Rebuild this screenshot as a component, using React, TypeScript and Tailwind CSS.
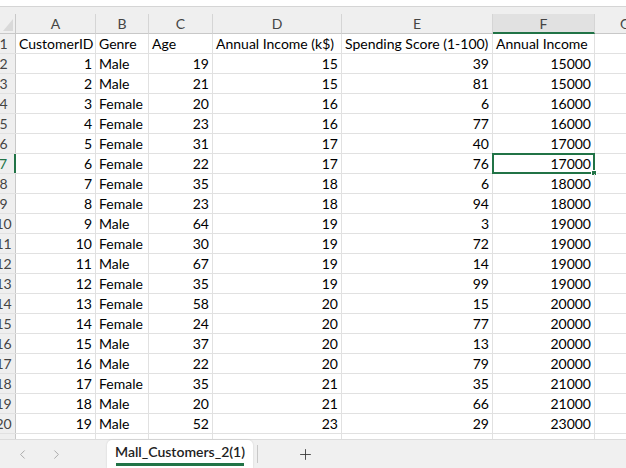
import React from 'react';
import { ChevronLeft, ChevronRight, Plus } from 'lucide-react';

const rows: [number, string, number, number, number, number][] = [
  [1, 'Male', 19, 15, 39, 15000],
  [2, 'Male', 21, 15, 81, 15000],
  [3, 'Female', 20, 16, 6, 16000],
  [4, 'Female', 23, 16, 77, 16000],
  [5, 'Female', 31, 17, 40, 17000],
  [6, 'Female', 22, 17, 76, 17000],
  [7, 'Female', 35, 18, 6, 18000],
  [8, 'Female', 23, 18, 94, 18000],
  [9, 'Male', 64, 19, 3, 19000],
  [10, 'Female', 30, 19, 72, 19000],
  [11, 'Male', 67, 19, 14, 19000],
  [12, 'Female', 35, 19, 99, 19000],
  [13, 'Female', 58, 20, 15, 20000],
  [14, 'Female', 24, 20, 77, 20000],
  [15, 'Male', 37, 20, 13, 20000],
  [16, 'Male', 22, 20, 79, 20000],
  [17, 'Female', 35, 21, 35, 21000],
  [18, 'Male', 20, 21, 66, 21000],
  [19, 'Male', 52, 23, 29, 23000],
];

const cell = 'h-full shrink-0 border-r border-[#e1e1e1] px-[3px] flex items-center whitespace-nowrap overflow-hidden';

function ColHead({ w, label, active }: { w: string; label: string; active?: boolean }) {
  return (
    <div
      className={`${w} h-full shrink-0 flex items-center justify-center border-r border-[#d5d5d5] text-[#444] ${
        active ? 'bg-[#e1e1e1] border-b-2 border-b-[#217346]' : 'border-b border-b-[#c8c8c8]'
      }`}
    >
      {label}
    </div>
  );
}

export default function App() {
  return (
    <div
      className="w-[626px] h-[468px] overflow-hidden bg-white flex flex-col text-[14px] text-black"
      style={{ fontFamily: 'Lato, "Liberation Sans", sans-serif' }}
    >
      <div className="h-[6px] shrink-0 bg-white" />
      <div className="h-[8px] shrink-0 bg-[#efefef] border-t border-[#d5d5d5]" />

      {/* column header */}
      <div className="h-[20px] shrink-0 flex bg-[#efefef]">
        <div className="w-[24px] -ml-[8px] h-full shrink-0 border-r border-b border-[#c8c8c8] flex items-end justify-end pr-[2px] pb-[2px]">
          <svg width="10" height="12" viewBox="0 0 10 12">
            <polygon points="10,0 10,12 0,12" fill="#d9d9d9" />
          </svg>
        </div>
        <ColHead w="w-[80px]" label="A" />
        <ColHead w="w-[53px]" label="B" />
        <ColHead w="w-[64px]" label="C" />
        <ColHead w="w-[129px]" label="D" />
        <ColHead w="w-[151px]" label="E" />
        <ColHead w="w-[102px]" label="F" active />
        <div className="w-[60px] h-full shrink-0 flex items-center justify-center border-b border-[#c8c8c8] text-[#444]">G</div>
      </div>

      {/* header row 1 */}
      <div className="h-[20px] shrink-0 flex border-b border-[#e1e1e1]">
        <div className="w-[24px] -ml-[8px] h-full shrink-0 bg-[#efefef] border-r border-[#c8c8c8] flex items-center justify-center text-[#444]">1</div>
        <div className={`${cell} w-[80px]`}>CustomerID</div>
        <div className={`${cell} w-[53px]`}>Genre</div>
        <div className={`${cell} w-[64px]`}>Age</div>
        <div className={`${cell} w-[129px]`}>Annual Income (k$)</div>
        <div className={`${cell} w-[151px]`}>Spending Score (1-100)</div>
        <div className={`${cell} w-[102px]`}>Annual Income</div>
        <div className={`${cell} w-[60px] border-r-0`} />
      </div>

      {rows.map((r, i) => {
        const n = i + 2;
        const sel = n === 7;
        return (
          <div key={n} className="h-[20px] shrink-0 flex border-b border-[#e1e1e1]">
            <div
              className={`w-[24px] -ml-[8px] h-full shrink-0 bg-[#efefef] flex items-center justify-center ${
                sel ? 'border-r-2 border-[#217346] text-[#217346] bg-[#e1e1e1]' : 'border-r border-[#c8c8c8] text-[#444]'
              }`}
            >
              {n}
            </div>
            <div className={`${cell} w-[80px] justify-end`}>{r[0]}</div>
            <div className={`${cell} w-[53px]`}>{r[1]}</div>
            <div className={`${cell} w-[64px] justify-end`}>{r[2]}</div>
            <div className={`${cell} w-[129px] justify-end`}>{r[3]}</div>
            <div className={`${cell} w-[151px] justify-end`}>{r[4]}</div>
            <div className={`${cell} w-[102px] justify-end relative overflow-visible`}>
              {r[5]}
              {sel && (
                <>
                  <div className="absolute -left-px -top-px -right-px -bottom-px border-2 border-[#217346]" />
                  <div className="absolute -right-[3px] -bottom-[3px] w-[6px] h-[6px] bg-[#217346] border border-white" />
                </>
              )}
            </div>
            <div className={`${cell} w-[60px] border-r-0`} />
          </div>
        );
      })}

      {/* partial row 21 */}
      <div className="h-[5px] shrink-0 flex overflow-hidden">
        <div className="w-[24px] -ml-[8px] h-full shrink-0 bg-[#efefef] border-r border-[#c8c8c8]" />
        <div className={`${cell} w-[80px]`} />
        <div className={`${cell} w-[53px]`} />
        <div className={`${cell} w-[64px]`} />
        <div className={`${cell} w-[129px]`} />
        <div className={`${cell} w-[151px]`} />
        <div className={`${cell} w-[102px]`} />
      </div>

      {/* sheet tabs */}
      <div className="flex-1 flex items-stretch bg-[#f0f0f0] border-t border-[#dcdcdc]">
        <div className="w-[107px] shrink-0 flex items-center pl-[15px] gap-[19px] text-[#a0a0a0]">
          <ChevronLeft size={15} strokeWidth={1.4} />
          <ChevronRight size={15} strokeWidth={1.4} />
        </div>
        <div className="w-[146px] shrink-0 bg-white rounded-t-[5px] shadow-[0_0_2px_rgba(0,0,0,0.15)] flex flex-col items-center justify-center pt-[2px]">
          <span className="font-semibold text-[#222] leading-none">Mall_Customers_2(1)</span>
          <div className="w-[128px] h-[3px] bg-[#217346] mt-[4px]" />
        </div>
        <div className="w-px h-[18px] self-center ml-[4px] bg-[#c8c8c8]" />
        <div className="flex items-center pl-[39px] text-[#333]">
          <Plus size={17} strokeWidth={1.2} />
        </div>
      </div>
    </div>
  );
}
